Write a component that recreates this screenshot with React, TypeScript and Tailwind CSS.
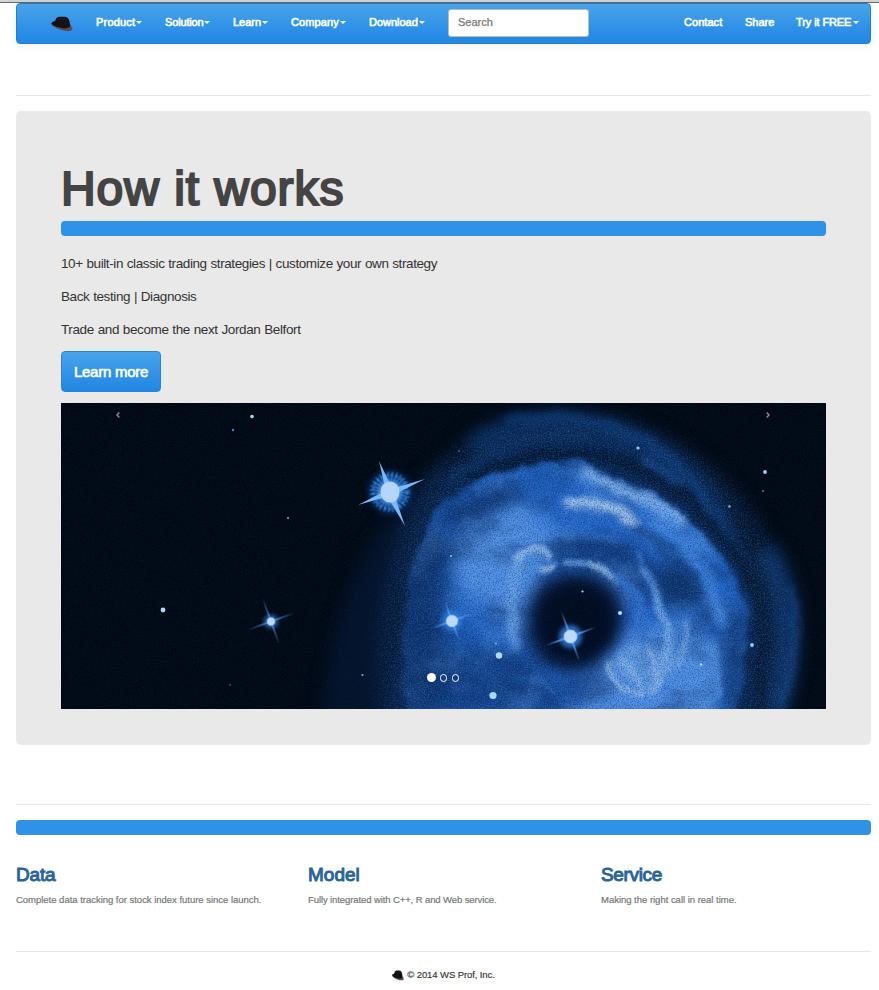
import React from "react";

function Hat({ className }: { className: string }) {
  return (
    <svg viewBox="0 0 22 16" preserveAspectRatio="none" className={className} aria-hidden="true">
      <path d="M0.300 7.500C1 6 3.500 6 5.500 6.200L19 9.800c2.300.8 3 2.700 2.200 3.900-1.600 2-7 1.400-11.200 0C5.500 12.400.2 10 .3 7.500z" fill="#5b4c54" />
      <path d="M.6 7.300C1 5.800 3 5.700 4.300 4.800 4.800 2.300 6 .9 8.500.7c2-.1 3.200.1 4.500 0 2.600-.2 4.400 1.300 5.200 3.700.6 2 .9 4 1.300 5.600-1.900 2.100-5.500 3-9 2.100C6 11 .6 9.500.6 7.300z" fill="#151116" />
      <path d="M7 3c2-.8 4 1 6 0 1.500-.4 2.500.6 3 2" fill="none" stroke="#2b252a" strokeWidth="1" />
    </svg>
  );
}

function Caret() {
  return <span className="mt-px ml-px h-0 w-0 border-x-[3px] border-t-[3px] border-x-transparent border-t-white" />;
}

const NAV = [
  { label: "Product", box: "w-[69px]", text: "w-[39px] tracking-[0.2px]" },
  { label: "Solution", box: "w-[68px]", text: "w-[38px] tracking-[-0.15px]" },
  { label: "Learn", box: "w-[58px]", text: "w-[28px] tracking-[0px]" },
  { label: "Company", box: "w-[78px]", text: "w-[48px] tracking-[0.1px]" },
  { label: "Download", box: "w-[79px]", text: "w-[49px] tracking-[-0.02px]" },
];

function Navbar() {
  return (
    <nav className="flex h-[41px] items-center rounded-[4px] border border-[#1e7fd6] bg-linear-to-b from-[#49a3e9] via-[#2f92e7] via-60% to-[#2386e0] pl-[34px] text-[11px] leading-[16px] text-white shadow-[0_1px_8px_rgba(0,0,0,0.08)] [-webkit-text-stroke:0.6px_#fff]">
      <Hat className="mr-[23px] h-[16px] w-[22px]" />
      {NAV.map((item) => (
        <a key={item.label} className={`flex shrink-0 items-center pb-[3px] ${item.box}`}>
          <span className={`whitespace-nowrap ${item.text}`}>{item.label}</span>
          <Caret />
        </a>
      ))}
      <div className="mb-[2px] flex h-[28px] w-[141px] shrink-0 items-center rounded-[3px] border border-[#bbb] bg-white pb-px pl-[9px] text-[11px] text-[#777] [-webkit-text-stroke:0.25px_#777]">
        Search
      </div>
      <a className="ml-[95px] w-[61px] shrink-0 pb-[3px] tracking-[0.05px]">Contact</a>
      <a className="w-[51px] shrink-0 pb-[3px]">Share</a>
      <a className="flex shrink-0 items-center pb-[3px]">
        <span className="w-[56px] whitespace-nowrap tracking-[-0.1px]">Try it FREE</span>
        <Caret />
      </a>
    </nav>
  );
}

type StarProps = { x: number; y: number; r: number; ray: number };

function Star({ x, y, r, ray }: StarProps) {
  const w = r * 0.24;
  return (
    <g transform={`translate(${x} ${y}) rotate(-20)`}>
      <circle r={r * 1.7} fill="#2f7fe0" opacity="0.8" filter="url(#b2)" />
      <path
        d={`M${-ray} 0L0 ${-w}L${ray} 0L0 ${w}z M0 ${-ray}L${w} 0L0 ${ray}L${-w} 0z`}
        fill="#5aa2f5"
        opacity="0.75"
        filter="url(#b05)"
      />
      <circle r={r} fill="#bdd9fb" filter="url(#b05)" />
    </g>
  );
}

const DOTS = [
  [252, 416.5, 1.8, "#a8dcff"], [233, 430, 1.2, "#4088d8"], [288, 518, 1, "#79b8ee"],
  [163, 610, 2.4, "#a8dcff"], [230, 685, 0.9, "#2d5d9c"], [362.5, 675, 1.1, "#69b4ee"],
  [638, 448, 1.6, "#92cdf5"], [765, 472, 1.9, "#92d0f5"], [763, 491, 0.9, "#4b82b8"],
  [729.5, 506.5, 1.2, "#79b8ee"], [752, 645, 1.9, "#92d0e8"], [701, 664.5, 1.2, "#b0dcf8"],
  [620, 613, 2, "#b8e4fc"], [582.5, 591.5, 1.1, "#a0e0fc"], [451, 556, 1, "#8cc8f5"],
  [499, 655.5, 3.2, "#b3dafa"], [493, 695.5, 3.6, "#a8d4fa"], [496, 643.5, 1, "#70b8f5"],
  [459, 451, 1, "#2d66ae"],
] as const;

const SHELL =
  "M412 740C400 690 400 640 406 600C411 560 425 522 446 502C468 481 500 470 530 466Q560 462 578 461Q600 474 628 482Q655 492 672 505C692 525 712 545 728 566C744 590 750 625 746 660Q740 700 736 740z";

function Nebula() {
  return (
    <svg viewBox="61 403 765 306" className="block h-[306px] w-[765px]" colorInterpolationFilters="sRGB" aria-hidden="true">
      <defs>
        <filter id="b05" x="-60%" y="-60%" width="220%" height="220%"><feGaussianBlur stdDeviation="0.5" /></filter>
        <filter id="b2" filterUnits="userSpaceOnUse" x="-800" y="-800" width="2400" height="2400"><feGaussianBlur stdDeviation="2" /></filter>
        <filter id="b3" filterUnits="userSpaceOnUse" x="-800" y="-800" width="2400" height="2400"><feGaussianBlur stdDeviation="3.5" /></filter>
        <filter id="b8" filterUnits="userSpaceOnUse" x="200" y="300" width="800" height="520"><feGaussianBlur stdDeviation="8" /></filter>
        <filter id="wisps" filterUnits="userSpaceOnUse" x="300" y="403" width="526" height="306">
          <feTurbulence type="fractalNoise" baseFrequency="0.018 0.03" numOctaves="5" seed="8" />
          <feColorMatrix values="0 0 0 0 0.03  0 0 0 0 0.16  0 0 0 0 0.38  3 0 0 0 -1.3" />
        </filter>
        <filter id="lights" filterUnits="userSpaceOnUse" x="300" y="403" width="526" height="306">
          <feTurbulence type="fractalNoise" baseFrequency="0.025" numOctaves="5" seed="21" />
          <feColorMatrix values="0 0 0 0 0.4  0 0 0 0 0.66  0 0 0 0 0.98  0 2.8 0 0 -1.3" />
        </filter>
        <filter id="darkGrain" filterUnits="userSpaceOnUse" x="61" y="403" width="765" height="306">
          <feTurbulence type="fractalNoise" baseFrequency="0.75" numOctaves="2" seed="3" />
          <feColorMatrix values="0 0 0 0 0.01  0 0 0 0 0.08  0 0 0 0 0.22  1.8 0 0 0 -0.7" />
        </filter>
        <filter id="lightGrain" filterUnits="userSpaceOnUse" x="61" y="403" width="765" height="306">
          <feTurbulence type="fractalNoise" baseFrequency="0.7" numOctaves="2" seed="14" />
          <feColorMatrix values="0 0 0 0 0.4  0 0 0 0 0.64  0 0 0 0 0.95  0 2 0 0 -0.8" />
        </filter>
        <filter id="warp" filterUnits="userSpaceOnUse" x="300" y="380" width="526" height="360">
          <feTurbulence type="fractalNoise" baseFrequency="0.04" numOctaves="4" seed="5" result="n" />
          <feDisplacementMap in="SourceGraphic" in2="n" scale="12" xChannelSelector="R" yChannelSelector="G" />
        </filter>
        <linearGradient id="fadeLeft" x1="398" x2="465" y1="0" y2="0" gradientUnits="userSpaceOnUse">
          <stop offset="0" stopColor="#fff" stopOpacity="0.45" />
          <stop offset="1" stopColor="#fff" />
        </linearGradient>
        <mask id="shell" maskUnits="userSpaceOnUse" x="300" y="403" width="526" height="306">
          <g filter="url(#warp)"><path d={SHELL} fill="url(#fadeLeft)" filter="url(#b2)" /></g>
        </mask>
        <mask id="glow" maskUnits="userSpaceOnUse" x="300" y="403" width="526" height="306">
          <path d="M385 740C370 600 400 470 480 435C580 390 700 430 750 510C795 570 805 650 780 740z" fill="#fff" filter="url(#b8)" />
          <ellipse cx="576" cy="621" rx="46" ry="46" fill="#000" filter="url(#b8)" />
        </mask>
      </defs>
      <rect x="61" y="403" width="765" height="306" fill="#020810" />

      <g filter="url(#b8)">
        <path d="M322 740C322 600 385 490 480 430C590 385 690 430 748 504C790 560 807 640 775 740z" fill="#041328" />
        <path d="M404 600C405 520 460 440 540 430C620 420 700 470 742 560L765 620L760 720L390 720z" fill="#06234c" />
        <path d="M384 720C374 620 395 520 450 463" fill="none" stroke="#061c3c" strokeWidth="14" />
        <path d="M470 445C550 395 640 426 691 477C727 513 740 568 745 630" fill="none" stroke="#0b3268" strokeWidth="16" />
        <path d="M765 550C790 590 796 645 774 714" fill="none" stroke="#0d3468" strokeWidth="24" />
      </g>
      <g filter="url(#warp)">
        <g fill="none" filter="url(#b3)">
          <path d="M450 480C486 448 538 432 590 436" stroke="#0b3060" strokeWidth="6" />
          <path d="M505 421C580 408 642 426 686 476C722 512 738 555 746 620" stroke="#0e3b76" strokeWidth="6" />
          <path d="M645 457L682 486" stroke="#1e5aa8" strokeWidth="4" />
          <path d="M470 480C520 450 590 444 640 470C690 494 730 534 750 590" stroke="#03142e" strokeWidth="10" />
          <path d="M755 575C766 625 762 674 757 714" stroke="#051830" strokeWidth="10" />
          <path d="M790 585C798 620 795 660 782 707" stroke="#154380" strokeWidth="6" />
        </g>
      </g>

      <g mask="url(#shell)">
        <rect x="390" y="450" width="370" height="260" fill="#1c5cb8" />
        <g filter="url(#b8)">
          <path d="M449 555L495 510L530 492L625 478L692 535L727 575L736 610L700 650L728 720L555 720L520 655L449 610z" fill="#246ad0" />
          <path d="M452 545L485 518L525 500L552 540L534 590L520 645L490 605L456 588z" fill="#5496ec" />
          <path d="M575 465L625 480L674 502L718 556L700 560L640 505L590 488z" fill="#4890ec" />
          <path d="M590 672L620 632L692 624L722 650L710 718L576 718z" fill="#5294ec" />
          <path d="M643 570L688 560L712 603L670 612z" fill="#0e356e" />
          <path d="M405 585L430 525L450 545L440 620L470 709L403 709z" fill="#123f85" />
          <path d="M440 512L500 486L520 499L456 530z" fill="#0e3470" />
          <path d="M550 547L629 540L665 570L641 600L600 567L549 565z" fill="#123f86" />
          <path d="M463 645L530 655L575 712L440 716z" fill="#134590" />
          <path d="M722 620L750 605L750 712L724 712z" fill="#154488" />
        </g>
        <rect x="390" y="450" width="365" height="260" filter="url(#wisps)" opacity="0.45" />
        <g filter="url(#warp)">
          <g fill="none" filter="url(#b3)" strokeLinecap="round">
            <path d="M655 522C692 548 716 579 722 620" stroke="#3f86e6" strokeWidth="10" />
            <path d="M630 525C664 542 684 563 700 590" stroke="#123f80" strokeWidth="8" />
            <path d="M557 547Q590 536 622 550" stroke="#0f3775" strokeWidth="8" />
            <path d="M562 537Q594 529 614 541" stroke="#367bd6" strokeWidth="5" />
            <path d="M520 556Q508 592 514 645" stroke="#72acf2" strokeWidth="8" />
            <path d="M712 645L716 700" stroke="#5a9bf0" strokeWidth="7" />
            <path d="M585 474C615 490 650 494 680 520" stroke="#86b9f5" strokeWidth="10" />
            <path d="M568 503Q600 502 616 510L632 522" stroke="#b0d3fa" strokeWidth="11" />
          </g>
          <g fill="none" filter="url(#b2)" strokeLinecap="round">
            <path d="M517 557Q530 549 543 547L547 556" stroke="#9ac6f8" strokeWidth="6" />
            <path d="M541 567L553 568" stroke="#a6cdf9" strokeWidth="8" />
            <path d="M565 564Q582 561 595 566Q607 572 616 583" stroke="#78b0f2" strokeWidth="5" />
          </g>
        </g>
        <rect x="390" y="450" width="365" height="260" filter="url(#lights)" opacity="0.32" />
      </g>

      <path d="M530 605C535 580 559 570 585 574C611 578 626 597 624 617C621 641 608 650 597 662C579 678 545 674 535 655C525 645 528 620 530 605z" fill="#06183a" filter="url(#b8)" />
      <ellipse cx="576" cy="622" rx="37" ry="38" fill="#020b1d" filter="url(#b8)" />
      <g filter="url(#warp)" opacity="0.85">
        <g fill="none" filter="url(#b2)" strokeLinecap="round">
          <path d="M618 578C640 590 646 618 642 646" stroke="#3378d4" strokeWidth="8" />
          <path d="M646 573C664 600 672 640 668 671" stroke="#7ab2f3" strokeWidth="8" />
          <path d="M666 655Q664 682 650 690" stroke="#8bbdf5" strokeWidth="9" />
          <path d="M638 556C646 566 653 583 656 610" stroke="#3f84de" strokeWidth="4" />
          <path d="M686 625Q685 648 676 666" stroke="#8bbdf5" strokeWidth="4" />
          <ellipse cx="642" cy="664" rx="27" ry="21" fill="#7ab0f2" stroke="none" opacity="0.6" />
          <path d="M611 664C607 676 622 694 640 694" stroke="#b8d8fa" strokeWidth="4" />
          <path d="M622 659Q634 668 640 690M648 650Q660 672 652 690" stroke="#a6cdf9" strokeWidth="4" />
          <path d="M533 677L555 690" stroke="#3379cd" strokeWidth="3" />
          <path d="M590 564Q599 566 610 578" stroke="#c0dcfb" strokeWidth="3" />
        </g>
      </g>

      <rect x="61" y="403" width="765" height="306" filter="url(#darkGrain)" opacity="0.6" />
      <g mask="url(#glow)"><rect x="61" y="403" width="765" height="306" filter="url(#lightGrain)" opacity="0.3" /></g>
      <rect x="61" y="403" width="765" height="306" filter="url(#lightGrain)" opacity="0.05" />

      <g transform="translate(390 492)">
        <circle r="20" fill="#0f56b0" opacity="0.8" filter="url(#b3)" />
        <circle r="15" fill="none" stroke="#5ba3f5" strokeWidth="11" strokeDasharray="1.500 1.900" opacity="0.3" filter="url(#b05)" />
        <circle r="17" fill="none" stroke="#5ba3f5" strokeWidth="3" strokeDasharray="3 2" opacity="0.35" filter="url(#b05)" />
        <circle r="12" fill="#4f96ec" filter="url(#b2)" />
        <path d="M-32 13L-3 -2L35 -13L3 3z M-11 -31L2.500 -3L15 34L-3 4z" fill="#7ab8fa" filter="url(#b05)" />
        <ellipse rx="9.500" ry="10.500" fill="#b4d6fc" filter="url(#b05)" />
      </g>
      <Star x={271} y={621.5} r={4} ray={25} />
      <Star x={452} y={621} r={6} ray={22} />
      <Star x={570.5} y={636.5} r={6.8} ray={27} />
      {DOTS.map(([x, y, r, color]) => (
        <circle key={`${x}-${y}`} cx={x} cy={y} r={r} fill={color} />
      ))}
    </svg>
  );
}

function Carousel() {
  return (
    <div className="relative mt-[11px] h-[306px] w-[765px] overflow-hidden">
      <Nebula />
      <svg viewBox="0 0 4 6" className="absolute top-[9px] left-[55px] h-[6px] w-[4px]"><path d="M3.300.5L1 3l2.300 2.500" fill="none" stroke="#888" strokeWidth="1.5" /></svg>
      <svg viewBox="0 0 4 6" className="absolute top-[9px] left-[705px] h-[6px] w-[4px]"><path d="M.7.5L3 3 .7 5.500" fill="none" stroke="#888" strokeWidth="1.5" /></svg>
      <div className="absolute top-[270px] left-[366px] flex items-center gap-[4px]">
        <span className="h-[9px] w-[9px] rounded-full bg-white" />
        <span className="h-[8px] w-[7px] rounded-full border border-white" />
        <span className="ml-px h-[8px] w-[7px] rounded-full border border-white" />
      </div>
    </div>
  );
}

const FEATURES = [
  { title: "Data", titleStyle: "tracking-[-0.2px]", text: "Complete data tracking for stock index future since launch.", textStyle: "tracking-[-0.02px]" },
  { title: "Model", titleStyle: "tracking-[0px]", text: "Fully integrated with C++, R and Web service.", textStyle: "tracking-[-0.1px]" },
  { title: "Service", titleStyle: "tracking-[-0.35px]", text: "Making the right call in real time.", textStyle: "tracking-[-0.02px]" },
];

export default function App() {
  return (
    <div className="h-[990px] w-[879px] overflow-hidden bg-white font-['Liberation_Sans',Arial,sans-serif] text-[#333]">
      <div className="h-[3px] border-b border-[#666] bg-[#d4d4d4]" />
      <div className="pr-[8px] pl-[16px]">
        <Navbar />
        <hr className="mt-[51px] border-[#e7e7e7]" />
        <section className="mt-[15px] h-[634px] rounded-[5px] bg-[#e9e9e9] px-[45px] pt-[50px]">
          <h1 className="h-[60px] text-[48px] leading-[56px] font-normal tracking-[0.95px] text-[#444] [-webkit-text-stroke:2.2px_#444]">How it works</h1>
          <div className="h-[15px] rounded-[4px] bg-[#2f92e7]" />
          <p className="mt-[18px] text-[13.5px] leading-[20px] tracking-[-0.4px] [word-spacing:0.4px]">10+ built-in classic trading strategies | customize your own strategy</p>
          <p className="mt-[13px] text-[13.5px] leading-[20px] tracking-[-0.4px] [word-spacing:0.4px]">Back testing | Diagnosis</p>
          <p className="mt-[13px] text-[13.5px] leading-[20px] tracking-[-0.38px] [word-spacing:0.4px]">Trade and become the next Jordan Belfort</p>
          <button className="mt-[11px] flex h-[41px] w-[100px] items-center justify-center rounded-[4px] border border-[#2b83d2] bg-linear-to-b from-[#49a3e9] via-[#2f92e7] via-60% to-[#2386e0] pt-px text-[15px] tracking-[-0.25px] whitespace-nowrap text-white [-webkit-text-stroke:0.6px_#fff]">
            Learn more
          </button>
          <Carousel />
        </section>
        <hr className="mt-[59px] border-[#e7e7e7]" />
        <div className="mt-[15px] h-[15px] rounded-[4px] bg-[#2f92e7]" />
        <div className="mt-[28px] grid h-[88px] grid-cols-[292px_293px_270px]">
          {FEATURES.map((f) => (
            <div key={f.title}>
              <h2 className={`text-[19px] leading-[24px] font-normal text-[#2a6496] [-webkit-text-stroke:1px_#2a6496] ${f.titleStyle}`}>{f.title}</h2>
              <p className={`mt-[6px] text-[9.5px] leading-[14px] whitespace-nowrap text-[#777] [-webkit-text-stroke:0.2px_#777] ${f.textStyle}`}>{f.text}</p>
            </div>
          ))}
        </div>
        <hr className="border-[#e7e7e7]" />
        <footer className="mt-[16px] flex items-center justify-center text-[9.5px] leading-[14px] tracking-[-0.1px] [-webkit-text-stroke:0.15px_#333]">
          <Hat className="mr-[3px] h-[11px] w-[12px]" />
          <span>© 2014 WS Prof, Inc.</span>
        </footer>
      </div>
    </div>
  );
}
